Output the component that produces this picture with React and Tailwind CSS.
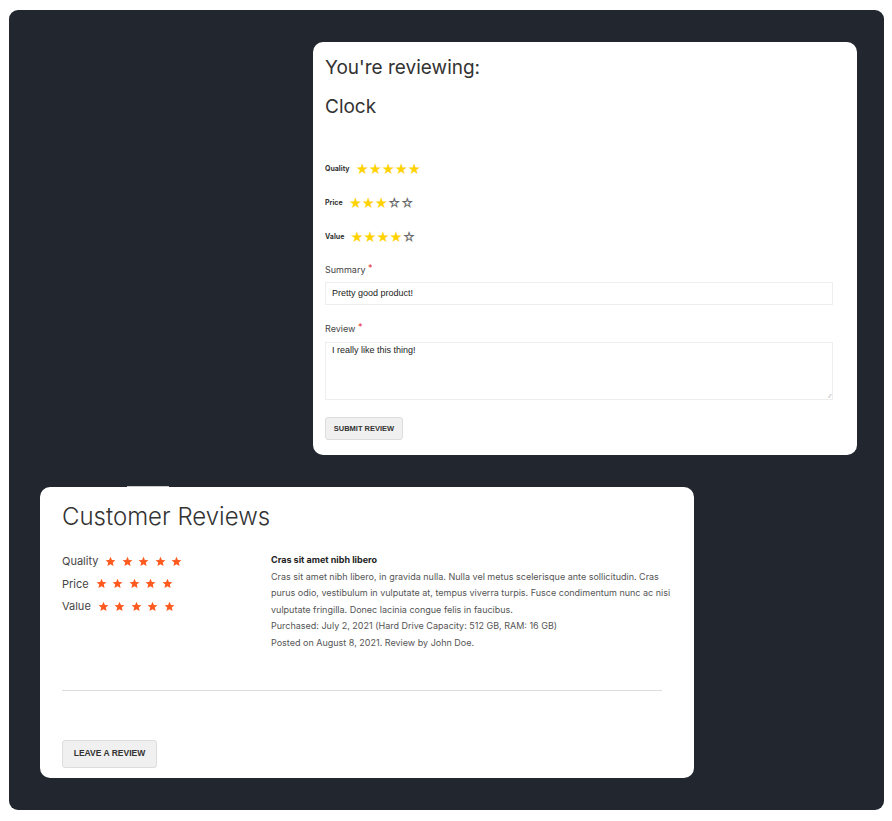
import React from "react"

const font = { fontFamily: "Inter, 'Noto Sans', sans-serif" }
const arial = { fontFamily: "'Liberation Sans', Arial, sans-serif" }

const Stars = ({ n }) => (
  <span className="text-[13px] leading-none tracking-[-0.6px]">
    {[0, 1, 2, 3, 4].map((i) => (
      <span key={i} className={i < n ? "text-[#ffd200]" : "text-[#666]"}>
        {i < n ? "★" : "☆"}
      </span>
    ))}
  </span>
)

const OrangeStar = () => (
  <svg viewBox="0 0 24 24" className="w-[11px] h-[11px]" fill="#ff5a1f">
    <path d="M12 1.5l3.1 7.1 7.7.7-5.8 5.1 1.7 7.6L12 18l-6.7 4 1.7-7.6-5.8-5.1 7.7-.7z" />
  </svg>
)

const OrangeRow = ({ label }) => (
  <div className="flex items-center gap-[7px] h-[22.5px]">
    <span className="text-[11px] text-[#444]">{label}</span>
    <div className="flex gap-[5.5px]">
      {[0, 1, 2, 3, 4].map((i) => (
        <OrangeStar key={i} />
      ))}
    </div>
  </div>
)

const Label = ({ children }) => (
  <div className="text-[9px] leading-[12px] text-[#444]">
    {children} <span className="relative -top-[2px] text-[#e02b27]">*</span>
  </div>
)

export default function App() {
  return (
    <div className="w-[892px] h-[821px] bg-white pt-[10px] pl-[9px]" style={font}>
      <div className="w-[875px] h-[800px] bg-[#22262e] rounded-[9px] pt-[32px] flex flex-col">
        <div className="ml-[304px] w-[544px] h-[413px] bg-white rounded-[10px] px-[12px] pt-[14px]">
          <h2 className="text-[19px] text-[#333] leading-[24px]">You're reviewing:</h2>
          <h3 className="text-[19px] text-[#333] leading-[24px] mt-[15px]">Clock</h3>

          <div className="mt-[40px] flex flex-col gap-[14px]">
            {[["Quality", 5], ["Price", 3], ["Value", 4]].map(([l, n]) => (
              <div key={l} className="flex items-center h-[20px]">
                <span className="text-[7px] font-bold text-[#333] mr-[6px]">{l}</span>
                <Stars n={n} />
              </div>
            ))}
          </div>

          <div className="mt-[17px]">
            <Label>Summary</Label>
            <div className="mt-[6px] w-[508px] h-[23px] border border-[#eee] px-[6px] flex items-center text-[9px] text-[#222]" style={arial}>
              Pretty good product!
            </div>
          </div>

          <div className="mt-[18px]">
            <Label>Review</Label>
            <div className="relative mt-[7px] w-[508px] h-[58px] border border-[#eee] px-[6px] pt-[1px] text-[9px] text-[#222]" style={arial}>
              I really like this thing!
              <span className="absolute right-[1px] bottom-0 text-[6px] text-[#aaa] leading-none">⁄⁄</span>
            </div>
          </div>

          <button className="mt-[17px] w-[78px] h-[23px] bg-[#f0f0f0] border border-[#ddd] rounded-[3px] text-[7.5px] font-bold text-[#333]" style={arial}>
            SUBMIT REVIEW
          </button>
        </div>

        <div className="relative ml-[31px] mt-[32px] w-[654px] h-[291px] bg-white rounded-[10px] px-[22px] pt-[15px] flex flex-col">
          <div className="absolute left-[87px] top-[-1px] w-[42px] h-[1px] bg-[#ccc]" />
          <h2 className="text-[24px] font-light text-[#333] leading-[30px]">Customer Reviews</h2>
          <div className="flex mt-[18px]">
            <div className="w-[209px] flex flex-col">
              <OrangeRow label="Quality" />
              <OrangeRow label="Price" />
              <OrangeRow label="Value" />
            </div>
            <div className="w-[400px] text-[9px] text-[#555] leading-[16.6px] mt-[2px]">
              <div className="font-bold text-[#222]">Cras sit amet nibh libero</div>
              <div>
                Cras sit amet nibh libero, in gravida nulla. Nulla vel metus scelerisque ante sollicitudin. Cras purus odio, vestibulum in vulputate at, tempus viverra turpis. Fusce condimentum nunc ac nisi vulputate fringilla. Donec lacinia congue felis in faucibus.
              </div>
              <div>Purchased: July 2, 2021 (Hard Drive Capacity: 512 GB, RAM: 16 GB)</div>
              <div>Posted on August 8, 2021. Review by John Doe.</div>
            </div>
          </div>
          <div className="mt-[38px] w-[600px] h-[1px] bg-[#ddd]" />
          <button className="mt-[49px] w-[95px] h-[28px] bg-[#f0f0f0] border border-[#ddd] rounded-[3px] text-[8.5px] font-bold text-[#333]" style={arial}>
            LEAVE A REVIEW
          </button>
        </div>
      </div>
    </div>
  )
}
